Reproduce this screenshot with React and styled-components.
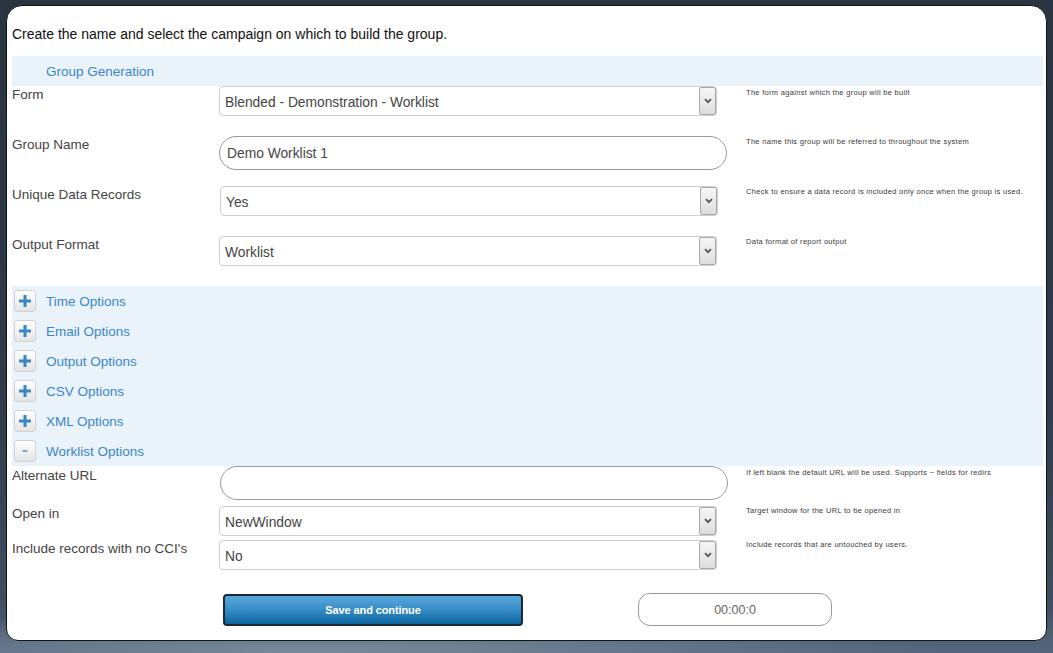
import React from "react";
import styled, { createGlobalStyle } from "styled-components";

const GlobalStyle = createGlobalStyle`
  html, body {
    margin: 0;
    padding: 0;
  }
  body {
    font-family: "Liberation Sans", Arial, sans-serif;
    background: radial-gradient(ellipse 60% 40px at 30% 100%, #7a8a9c 0%, rgba(90,106,126,0) 100%),
      linear-gradient(to bottom, #2b3441 0%, #303a48 60%, #3f4d60 92%, #56667c 100%);
    min-height: 653px;
  }
`;

const Page = styled.div`
  padding: 5px 6px 13px 6px;
  box-sizing: border-box;
  height: 653px;
`;

const Panel = styled.div`
  background: #fff;
  border: 1px solid #0b1a0c;
  border-radius: 16px 16px 12px 12px;
  height: 636px;
  box-sizing: border-box;
  padding: 20px 3px 0 5px;
  display: flex;
  flex-direction: column;
`;

const Intro = styled.div`
  font-size: 14px;
  color: #111;
  line-height: 16px;
  margin-bottom: 14px;
`;

const Band = styled.div`
  background: #eaf2fa;
  padding: 0 0 0 2px;
`;

const BandRow = styled.div`
  height: 30px;
  display: flex;
  align-items: center;
  gap: 10px;
`;

const BandTitle = styled.span`
  color: #3a87c8;
  font-size: 13.5px;
  margin-left: ${(p) => (p.$indent ? "32px" : "0")};
  padding-top: 1px;
`;

const ToggleButton = styled.span`
  width: 22px;
  height: 22px;
  box-sizing: border-box;
  border: 1px solid #d2d2d2;
  border-radius: 3px;
  background: linear-gradient(to bottom, #ffffff 0%, #f2f2f2 50%, #e4e4e4 100%);
  display: flex;
  align-items: center;
  justify-content: center;
`;

const Row = styled.div`
  display: grid;
  grid-template-columns: 207px 527px 1fr;
  height: ${(p) => p.$h}px;
`;

const Label = styled.div`
  font-size: 13.5px;
  color: #444;
  line-height: 16px;
  padding-top: ${(p) => p.$top ?? 1}px;
`;

const Help = styled.div`
  font-size: 7.5px;
  letter-spacing: 0.3px;
  color: #3a3a3a;
  line-height: 9px;
  padding-top: ${(p) => p.$top ?? 1}px;
  white-space: nowrap;
  -webkit-font-smoothing: none;
`;

const SelectBox = styled.div`
  width: 498px;
  height: 30px;
  box-sizing: border-box;
  border: 1px solid #cfcfcf;
  border-radius: 4px;
  display: flex;
  align-items: center;
  margin-left: ${(p) => p.$shift ?? 0}px;
`;

const SelectValue = styled.span`
  flex: 1;
  padding-left: 5px;
  padding-top: 2px;
  font-size: 13.8px;
  color: #444;
`;

const ArrowBox = styled.span`
  width: 17px;
  height: 28px;
  box-sizing: border-box;
  border: 1px solid #a9a9a9;
  border-radius: 2px;
  background: linear-gradient(to bottom, #f6f6f6 0%, #e8e8e8 60%, #dcdcdc 100%);
  display: flex;
  align-items: center;
  justify-content: center;
`;

const TextInput = styled.div`
  width: 508px;
  height: 34px;
  box-sizing: border-box;
  border: 1px solid #9a9a9a;
  border-radius: 17px;
  display: flex;
  align-items: center;
  padding-left: 7px;
  font-size: 13.8px;
  color: #444;
  margin-left: ${(p) => p.$shift ?? 0}px;
`;

const Footer = styled.div`
  display: flex;
  align-items: center;
  padding-left: 211px;
  margin-top: 24px;
  gap: 115px;
`;

const SaveButton = styled.button`
  width: 300px;
  height: 32px;
  border: 2px solid #1b2836;
  border-radius: 4px;
  background: linear-gradient(to bottom, #5aa8da 0%, #3a8fc8 45%, #0c66a0 100%);
  color: #fff;
  font-family: "Liberation Sans", Arial, sans-serif;
  font-weight: bold;
  font-size: 11px;
  letter-spacing: -0.1px;
  cursor: pointer;
`;

const Timer = styled.div`
  width: 194px;
  height: 33px;
  box-sizing: border-box;
  border: 1px solid #9a9a9a;
  border-radius: 12px;
  display: flex;
  align-items: center;
  justify-content: center;
  font-size: 12.5px;
  color: #666;
  margin-top: -1px;
`;

const Chevron = () => (
  <svg width="8" height="6" viewBox="0 0 8 6">
    <path d="M1 1.2 L4 4.2 L7 1.2" fill="none" stroke="#555" strokeWidth="1.8" />
  </svg>
);

const Plus = () => (
  <svg width="12" height="12" viewBox="0 0 12 12">
    <rect x="4.5" y="0" width="3" height="12" fill="#3a85c4" />
    <rect x="0" y="4.5" width="12" height="3" fill="#3a85c4" />
  </svg>
);

const Minus = () => (
  <svg width="12" height="12" viewBox="0 0 12 12">
    <rect x="3.5" y="5" width="5" height="2" fill="#7aa6cc" />
  </svg>
);

const Select = ({ value, shift }) => (
  <SelectBox $shift={shift}>
    <SelectValue>{value}</SelectValue>
    <ArrowBox>
      <Chevron />
    </ArrowBox>
  </SelectBox>
);

const sections = [
  { title: "Time Options", open: false },
  { title: "Email Options", open: false },
  { title: "Output Options", open: false },
  { title: "CSV Options", open: false },
  { title: "XML Options", open: false },
  { title: "Worklist Options", open: true },
];

export default function App() {
  return (
    <>
      <GlobalStyle />
      <Page>
        <Panel>
          <Intro>Create the name and select the campaign on which to build the group.</Intro>

          <Band>
            <BandRow>
              <BandTitle $indent>Group Generation</BandTitle>
            </BandRow>
          </Band>

          <Row $h={50}>
            <Label>Form</Label>
            <Select value="Blended - Demonstration - Worklist" />
            <Help $top={2}>The form against which the group will be built</Help>
          </Row>
          <Row $h={50}>
            <Label>Group Name</Label>
            <TextInput>Demo Worklist 1</TextInput>
            <Help>The name this group will be referred to throughout the system</Help>
          </Row>
          <Row $h={50}>
            <Label>Unique Data Records</Label>
            <Select value="Yes" shift={1} />
            <Help>Check to ensure a data record is included only once when the group is used.</Help>
          </Row>
          <Row $h={50}>
            <Label>Output Format</Label>
            <Select value="Worklist" />
            <Help>Data format of report output</Help>
          </Row>

          <Band>
            {sections.map((s) => (
              <BandRow key={s.title}>
                <ToggleButton>{s.open ? <Minus /> : <Plus />}</ToggleButton>
                <BandTitle>{s.title}</BandTitle>
              </BandRow>
            ))}
          </Band>

          <Row $h={40}>
            <Label $top={2}>Alternate URL</Label>
            <TextInput $shift={1} />
            <Help $top={2}>If left blank the default URL will be used. Supports ~ fields for redirs</Help>
          </Row>
          <Row $h={34}>
            <Label $top={0}>Open in</Label>
            <Select value="NewWindow" />
            <Help $top={0}>Target window for the URL to be opened in</Help>
          </Row>
          <Row $h={30}>
            <Label $top={1}>Include records with no CCI's</Label>
            <Select value="No" />
            <Help $top={0}>Include records that are untouched by users.</Help>
          </Row>

          <Footer>
            <SaveButton>Save and continue</SaveButton>
            <Timer>00:00:0</Timer>
          </Footer>
        </Panel>
      </Page>
    </>
  );
}
